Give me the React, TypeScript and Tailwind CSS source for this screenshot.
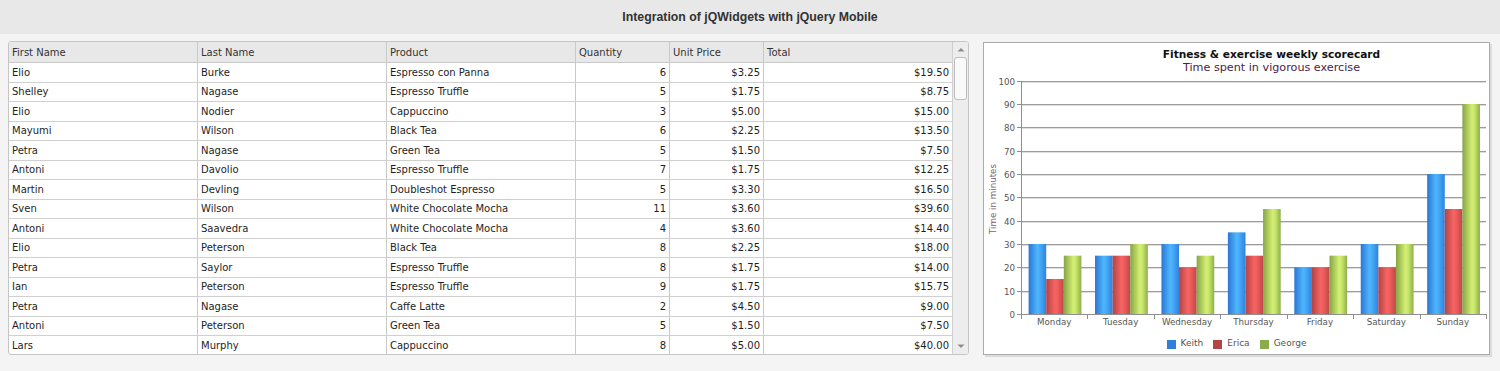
import React from "react";

type Row = [string, string, string, number, string, string];

const rows: Row[] = [
  ["Elio", "Burke", "Espresso con Panna", 6, "$3.25", "$19.50"],
  ["Shelley", "Nagase", "Espresso Truffle", 5, "$1.75", "$8.75"],
  ["Elio", "Nodier", "Cappuccino", 3, "$5.00", "$15.00"],
  ["Mayumi", "Wilson", "Black Tea", 6, "$2.25", "$13.50"],
  ["Petra", "Nagase", "Green Tea", 5, "$1.50", "$7.50"],
  ["Antoni", "Davolio", "Espresso Truffle", 7, "$1.75", "$12.25"],
  ["Martin", "Devling", "Doubleshot Espresso", 5, "$3.30", "$16.50"],
  ["Sven", "Wilson", "White Chocolate Mocha", 11, "$3.60", "$39.60"],
  ["Antoni", "Saavedra", "White Chocolate Mocha", 4, "$3.60", "$14.40"],
  ["Elio", "Peterson", "Black Tea", 8, "$2.25", "$18.00"],
  ["Petra", "Saylor", "Espresso Truffle", 8, "$1.75", "$14.00"],
  ["Ian", "Peterson", "Espresso Truffle", 9, "$1.75", "$15.75"],
  ["Petra", "Nagase", "Caffe Latte", 2, "$4.50", "$9.00"],
  ["Antoni", "Peterson", "Green Tea", 5, "$1.50", "$7.50"],
  ["Lars", "Murphy", "Cappuccino", 8, "$5.00", "$40.00"],
];

const chartData = [
  { day: "Monday", k: 30, e: 15, g: 25 },
  { day: "Tuesday", k: 25, e: 25, g: 30 },
  { day: "Wednesday", k: 30, e: 20, g: 25 },
  { day: "Thursday", k: 35, e: 25, g: 45 },
  { day: "Friday", k: 20, e: 20, g: 25 },
  { day: "Saturday", k: 30, e: 20, g: 30 },
  { day: "Sunday", k: 60, e: 45, g: 90 },
];

function Grid() {
  const cellBase = "flex items-center px-[3px] border-r border-[#c9c9c9] whitespace-nowrap overflow-hidden";
  return (
    <div className="w-[961px] h-[314px] border border-[#c5c5c5] rounded-[3px] bg-white flex overflow-hidden font-['DejaVu_Sans',sans-serif] text-[10px]">
      <div className="flex flex-col w-[943px] overflow-hidden">
        <div className="flex shrink-0 h-[21px] bg-[#e8e8e8] border-b border-[#c9c9c9] text-[#333]">
          <div className={`${cellBase} w-[189px]`}>First Name</div>
          <div className={`${cellBase} w-[189px]`}>Last Name</div>
          <div className={`${cellBase} w-[189px]`}>Product</div>
          <div className={`${cellBase} w-[94px]`}>Quantity</div>
          <div className={`${cellBase} w-[94px]`}>Unit Price</div>
          <div className="flex items-center px-[3px] w-[188px]">Total</div>
        </div>
        {rows.map((r, i) => (
          <div key={i} className="flex shrink-0 h-[19.5px] border-b border-[#d0d0d0] text-[#1e1e1e]">
            <div className={`${cellBase} w-[189px]`}>{r[0]}</div>
            <div className={`${cellBase} w-[189px]`}>{r[1]}</div>
            <div className={`${cellBase} w-[189px]`}>{r[2]}</div>
            <div className={`${cellBase} w-[94px] justify-end`}>{r[3]}</div>
            <div className={`${cellBase} w-[94px] justify-end`}>{r[4]}</div>
            <div className="flex items-center justify-end px-[3px] w-[188px]">{r[5]}</div>
          </div>
        ))}
      </div>
      <div className="w-[16px] border-l border-[#d0d0d0] bg-[#ededed] flex flex-col">
        <div className="h-[15px] flex items-center justify-center">
          <svg width="8" height="5" viewBox="0 0 8 5">
            <path d="M0.5 4.5 L4 1 L7.5 4.5 Z" fill="#8c8c8c" />
          </svg>
        </div>
        <div className="mx-[1px] h-[43px] rounded-[3px] border border-[#bdbdbd] bg-[#f9f9f9]" />
        <div className="flex-1" />
        <div className="h-[15px] flex items-center justify-center">
          <svg width="8" height="5" viewBox="0 0 8 5">
            <path d="M0.5 0.5 L4 4 L7.5 0.5 Z" fill="#8c8c8c" />
          </svg>
        </div>
      </div>
    </div>
  );
}

function Chart() {
  const X0 = 37;
  const X1 = 502;
  const catW = (X1 - X0) / 7;
  const y = (v: number) => 239 - v * 2.333;
  const barW = 17.6;
  const off = 7.6;
  const ticks = [0, 10, 20, 30, 40, 50, 60, 70, 80, 90, 100];
  return (
    <div className="w-[507px] h-[313px] border border-[#ababab] bg-white shadow-[2px_2px_0_#dcdcdc] flex flex-col font-['DejaVu_Sans',sans-serif]">
      <div className="mt-[4px] h-[14px] leading-[14px] text-center pl-[70px] text-[10.6px] font-bold text-[#111]">
        Fitness &amp; exercise weekly scorecard
      </div>
      <div className="h-[14px] leading-[14px] text-center pl-[70px] text-[11.2px] text-[#4b2347]">
        Time spent in vigorous exercise
      </div>
      <svg width="505" height="259" viewBox="0 0 505 259" className="block">
        <defs>
          <linearGradient id="gK" x1="0" x2="1" y1="0" y2="0">
            <stop offset="0" stopColor="#2a76d4" />
            <stop offset="0.5" stopColor="#4fb6fd" />
            <stop offset="0.65" stopColor="#46aaf7" />
            <stop offset="1" stopColor="#2f82de" />
          </linearGradient>
          <linearGradient id="gE" x1="0" x2="1" y1="0" y2="0">
            <stop offset="0" stopColor="#b34343" />
            <stop offset="0.5" stopColor="#f86464" />
            <stop offset="0.65" stopColor="#ef5d5d" />
            <stop offset="1" stopColor="#bd4848" />
          </linearGradient>
          <linearGradient id="gG" x1="0" x2="1" y1="0" y2="0">
            <stop offset="0" stopColor="#87a447" />
            <stop offset="0.55" stopColor="#d4f073" />
            <stop offset="0.7" stopColor="#c6e56a" />
            <stop offset="1" stopColor="#8fae4c" />
          </linearGradient>
        </defs>
        {ticks.slice(1).map((t) => {
          const yy = Math.round(y(t)) + 0.5;
          return (
            <g key={t}>
              <line x1={X0} x2={X1} y1={yy} y2={yy} stroke="#9c9c9c" strokeWidth="1" />
              <line x1={X0} x2={X1} y1={yy + 1} y2={yy + 1} stroke="#dedede" strokeWidth="1" />
            </g>
          );
        })}
        {chartData.map((d, i) => {
          const left = X0 + i * catW + off;
          return (
            <g key={d.day}>
              <rect x={left} y={y(d.k)} width={barW} height={d.k * 2.333} fill="url(#gK)" />
              <rect x={left + barW} y={y(d.e)} width={barW} height={d.e * 2.333} fill="url(#gE)" />
              <rect x={left + barW * 2} y={y(d.g)} width={barW} height={d.g * 2.333} fill="url(#gG)" />
            </g>
          );
        })}
        <line x1={X0 + 0.5} x2={X0 + 0.5} y1={Math.round(y(100))} y2={239.5} stroke="#8f8f8f" strokeWidth="1" />
        <line x1={X0} x2={X1 + 1} y1={239.5} y2={239.5} stroke="#8f8f8f" strokeWidth="1" />
        {ticks.map((t) => {
          const yy = Math.round(y(t)) + 0.5;
          return (
            <g key={"t" + t}>
              <line x1={X0 - 4} x2={X0} y1={yy} y2={yy} stroke="#8f8f8f" strokeWidth="1" />
              <text
                x={X0 - 6}
                y={yy + 3}
                textAnchor="end"
                fontFamily="DejaVu Sans, sans-serif"
                fontSize="8.7"
                fill="#565656"
              >
                {t}
              </text>
            </g>
          );
        })}
        {Array.from({ length: 8 }).map((_, i) => {
          const xx = Math.round(X0 + i * catW) + 0.5;
          return <line key={"x" + i} x1={xx} x2={xx} y1={239} y2={244} stroke="#8f8f8f" strokeWidth="1" />;
        })}
        {chartData.map((d, i) => (
          <text
            key={"l" + d.day}
            x={X0 + i * catW + catW / 2}
            y={249.5}
            textAnchor="middle"
            fontFamily="DejaVu Sans, sans-serif"
            fontSize="8.7"
            fill="#565656"
          >
            {d.day}
          </text>
        ))}
        <text
          x={0}
          y={0}
          transform="translate(12 124) rotate(-90)"
          textAnchor="middle"
          fontFamily="DejaVu Sans, sans-serif"
          fontSize="8.7"
          fill="#7d6070"
        >
          Time in minutes
        </text>
      </svg>
      <div className="h-[18px] mt-[1px] flex items-center justify-center gap-[10px] text-[9px] text-[#555]">
        <div className="flex items-center gap-[5px]">
          <span className="w-[9px] h-[9px] bg-[#2f7fdb]" />
          <span>Keith</span>
        </div>
        <div className="flex items-center gap-[5px]">
          <span className="w-[9px] h-[9px] bg-[#b44545]" />
          <span>Erica</span>
        </div>
        <div className="flex items-center gap-[5px]">
          <span className="w-[9px] h-[9px] bg-[#8aab4a]" />
          <span>George</span>
        </div>
      </div>
    </div>
  );
}

export default function App() {
  return (
    <div className="w-[1500px] h-[371px] bg-[#f4f4f4] flex flex-col overflow-hidden">
      <div className="h-[34px] bg-[#e8e8e8] flex items-center justify-center font-['Liberation_Sans',Arial,sans-serif] font-bold text-[12.3px] text-[#333]">
        Integration of jQWidgets with jQuery Mobile
      </div>
      <div className="flex items-start pt-[7px] pl-[8px]">
        <Grid />
        <div className="ml-[14px] mt-[1px]">
          <Chart />
        </div>
      </div>
    </div>
  );
}
